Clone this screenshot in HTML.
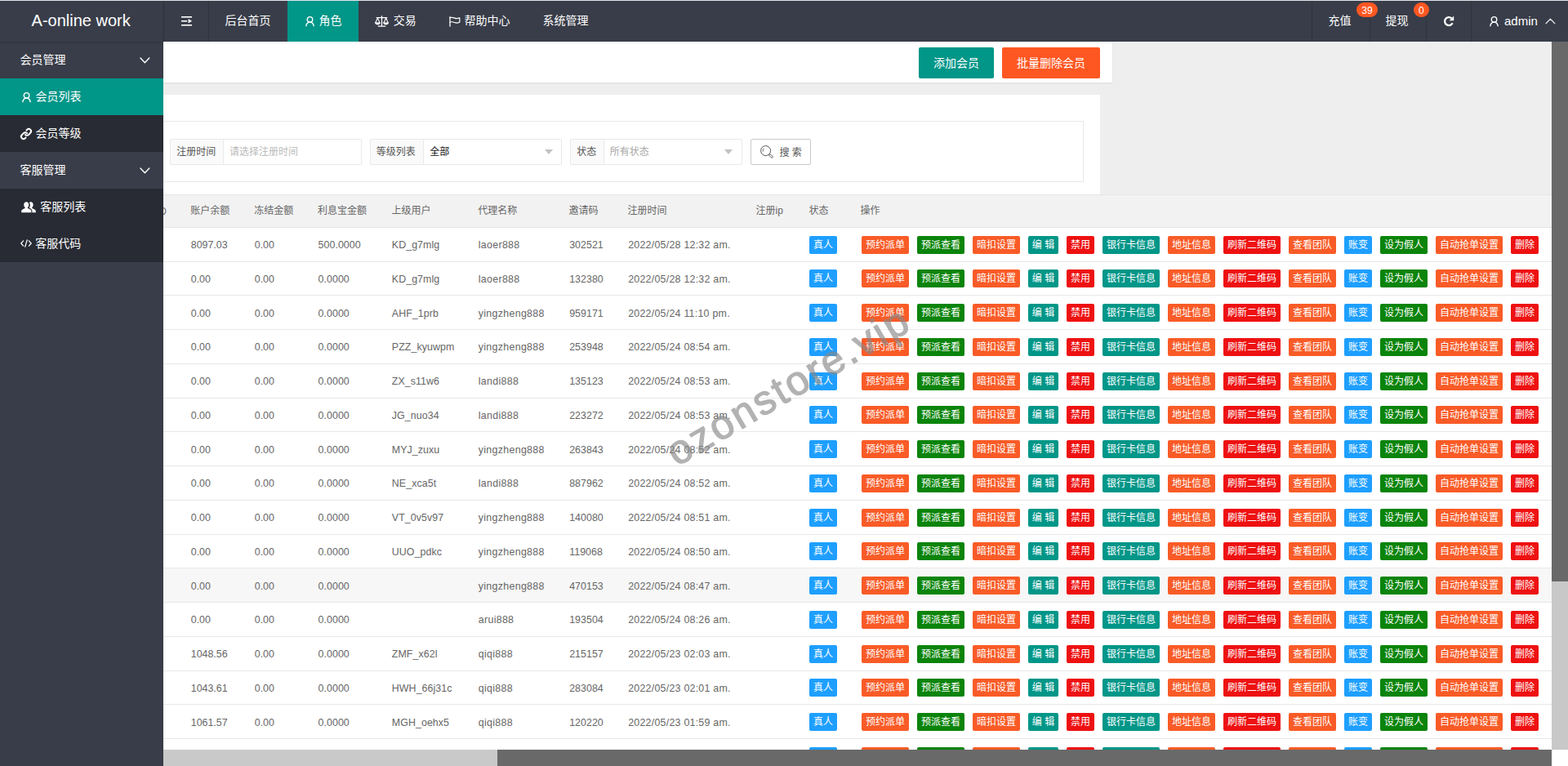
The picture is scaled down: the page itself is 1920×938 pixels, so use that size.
<!DOCTYPE html>
<html lang="zh-CN"><head><meta charset="utf-8"><title>A-online work</title>
<style>
html,body{margin:0;padding:0}
body{width:1920px;height:938px;overflow:hidden;position:relative;background:#eee;font-family:"Liberation Sans","Noto Sans CJK SC",sans-serif;font-size:12px;color:#666}
.a{position:absolute;box-sizing:border-box}
.t{white-space:nowrap}
svg.i{position:absolute;overflow:visible}
.w{color:#fff}
.btn{position:absolute;box-sizing:border-box;height:22px;border-radius:2px;color:#fff;font-size:12px;line-height:22px;text-align:center;white-space:nowrap;font-family:"Liberation Sans","Noto Sans CJK SC",sans-serif}
.o{background:#F95B27}.gr{background:#0b840b}.te{background:#009688}.re{background:#ee1111}.bl{background:#1E9FFF}
.row{position:absolute;left:200px;width:1700px;border-bottom:1px solid #e8e8e8;box-sizing:border-box;background:#fff}
.c{position:absolute;white-space:nowrap;color:#666;font-size:12.4px;height:20px;line-height:20px}

</style></head>
<body>
<div class="a" style="left:200px;top:51px;width:1162px;height:50px;background:#fff;box-shadow:0 1px 2px 0 rgba(0,0,0,.08)"></div>
<div class="a" style="left:200px;top:116px;width:1147px;height:123px;background:#fff"></div>
<div class="a" style="left:180px;top:148px;width:1147px;height:75px;border:1px solid #e8e8e8"></div>
<div class="a" style="left:1125px;top:58px;width:92px;height:38px;background:#009688;border-radius:2px;color:#fff;text-align:center;line-height:38px;font-size:14px">添加会员</div>
<div class="a" style="left:1227px;top:58px;width:120px;height:38px;background:#FF5722;border-radius:2px;color:#fff;text-align:center;line-height:38px;font-size:14px">批量删除会员</div>
<div class="a" style="left:208px;top:170px;width:234.5px;height:32px;border:1px solid #e9e9e9;border-radius:2px;background:#fff"></div><div class="a" style="left:208px;top:170px;width:65.5px;height:32px;border:1px solid #e9e9e9;border-radius:2px 0 0 2px;background:#FAFAFA"></div><div class="a t" style="left:216.2px;top:170px;height:32px;line-height:32px;font-size:12px;color:#555;">注册时间</div>
<div class="a t" style="left:281px;top:170px;height:32px;line-height:32px;font-size:12px;color:#b9b9b9;">请选择注册时间</div>
<div class="a" style="left:453px;top:170px;width:234.5px;height:32px;border:1px solid #e9e9e9;border-radius:2px;background:#fff"></div><div class="a" style="left:453px;top:170px;width:65.5px;height:32px;border:1px solid #e9e9e9;border-radius:2px 0 0 2px;background:#FAFAFA"></div><div class="a t" style="left:460.7px;top:170px;height:32px;line-height:32px;font-size:12px;color:#555;">等级列表</div>
<div class="a t" style="left:526.3px;top:170px;height:32px;line-height:32px;font-size:12px;color:#111;">全部</div>
<div class="a" style="left:666.5px;top:183px;width:0px;height:0px;border:5.5px solid transparent;border-top:6px solid #c2c2c2"></div>
<div class="a" style="left:698px;top:170px;width:211px;height:32px;border:1px solid #e9e9e9;border-radius:2px;background:#fff"></div><div class="a" style="left:698px;top:170px;width:41.5px;height:32px;border:1px solid #e9e9e9;border-radius:2px 0 0 2px;background:#FAFAFA"></div><div class="a t" style="left:706.2px;top:170px;height:32px;line-height:32px;font-size:12px;color:#555;">状态</div>
<div class="a t" style="left:746.8px;top:170px;height:32px;line-height:32px;font-size:12px;color:#a6a6a6;">所有状态</div>
<div class="a" style="left:887px;top:183px;width:0px;height:0px;border:5.5px solid transparent;border-top:6px solid #c2c2c2"></div>
<div class="a" style="left:919px;top:170px;width:74px;height:32px;border:1px solid #c9c9c9;border-radius:2px;background:#fff"></div>
<svg class="i" style="left:930px;top:177px" width="18" height="18" viewBox="0 0 18 18" fill="none" stroke="#555" stroke-width="1"><circle cx="7.600" cy="7.600" r="6"/><path d="M4.300 8.600a3.400 3.400 0 0 1 1.300-4" stroke-width=".9"/><rect x="-1.100" y="0" width="2.200" height="5.400" rx="1.100" transform="translate(12.100 12.100) rotate(-45)" fill="#fff" stroke-width=".9"/></svg>
<div class="a t" style="left:954.4px;top:171px;height:32px;line-height:32px;font-size:12px;color:#555;">搜 索</div>
<div class="a" style="left:200px;top:238px;width:1700px;height:41px;background:#f2f2f2;border-top:1px solid #e6e6e6;border-bottom:1px solid #e6e6e6"></div>
<div class="a t" style="left:195.2px;top:238.6px;height:40.5px;line-height:40.5px;font-size:12px;color:#666;clip-path:inset(0 0 0 4.8px)">D</div>
<div class="a t" style="left:233.35px;top:238px;height:40.5px;line-height:40.5px;font-size:12px;color:#666;">账户余额</div>
<div class="a t" style="left:311.35px;top:238px;height:40.5px;line-height:40.5px;font-size:12px;color:#666;">冻结金额</div>
<div class="a t" style="left:389.1px;top:238px;height:40.5px;line-height:40.5px;font-size:12px;color:#666;">利息宝金额</div>
<div class="a t" style="left:479.6px;top:238px;height:40.5px;line-height:40.5px;font-size:12px;color:#666;">上级用户</div>
<div class="a t" style="left:585.35px;top:238px;height:40.5px;line-height:40.5px;font-size:12px;color:#666;">代理名称</div>
<div class="a t" style="left:696.6px;top:238px;height:40.5px;line-height:40.5px;font-size:12px;color:#666;">邀请码</div>
<div class="a t" style="left:768.6px;top:238px;height:40.5px;line-height:40.5px;font-size:12px;color:#666;">注册时间</div>
<div class="a t" style="left:925.6px;top:238px;height:40.5px;line-height:40.5px;font-size:12px;color:#666;">注册ip</div>
<div class="a t" style="left:990.6px;top:238px;height:40.5px;line-height:40.5px;font-size:12px;color:#666;">状态</div>
<div class="a t" style="left:1053.6px;top:238px;height:40.5px;line-height:40.5px;font-size:12px;color:#666;">操作</div>
<div class="row" style="top:279px;height:42px;"><div class="c" style="left:33.75px;top:11px">8097.03</div><div class="c" style="left:111.75px;top:11px">0.00</div><div class="c" style="left:189.6px;top:11px;letter-spacing:0.05px">500.0000</div><div class="c" style="left:279.8px;top:11px;letter-spacing:0.08px">KD_g7mlg</div><div class="c" style="left:385.8px;top:11px;letter-spacing:0.31px">laoer888</div><div class="c" style="left:497.2px;top:11px;letter-spacing:0.04px">302521</div><div class="c" style="left:569.2px;top:11px;letter-spacing:0.25px">2022/05/28 12:32 am.</div><div class="btn bl" style="left:791px;top:10px;width:34px">真人</div><div class="btn o" style="left:855px;top:10px;width:58px">预约派单</div><div class="btn gr" style="left:923px;top:10px;width:58px">预派查看</div><div class="btn o" style="left:991px;top:10px;width:58px">暗扣设置</div><div class="btn te" style="left:1059px;top:10px;width:37px">编 辑</div><div class="btn re" style="left:1106px;top:10px;width:34px">禁用</div><div class="btn te" style="left:1150px;top:10px;width:70px">银行卡信息</div><div class="btn o" style="left:1230px;top:10px;width:58px">地址信息</div><div class="btn re" style="left:1298px;top:10px;width:70px">刷新二维码</div><div class="btn o" style="left:1378px;top:10px;width:58px">查看团队</div><div class="btn bl" style="left:1446px;top:10px;width:34px">账变</div><div class="btn gr" style="left:1490px;top:10px;width:58px">设为假人</div><div class="btn o" style="left:1558px;top:10px;width:82px">自动抢单设置</div><div class="btn re" style="left:1650px;top:10px;width:34px">删除</div></div>
<div class="row" style="top:321px;height:41px;"><div class="c" style="left:33.75px;top:11px">0.00</div><div class="c" style="left:111.75px;top:11px">0.00</div><div class="c" style="left:189.6px;top:11px;letter-spacing:0.05px">0.0000</div><div class="c" style="left:279.8px;top:11px;letter-spacing:0.08px">KD_g7mlg</div><div class="c" style="left:385.8px;top:11px;letter-spacing:0.31px">laoer888</div><div class="c" style="left:497.2px;top:11px;letter-spacing:0.04px">132380</div><div class="c" style="left:569.2px;top:11px;letter-spacing:0.25px">2022/05/28 12:32 am.</div><div class="btn bl" style="left:791px;top:9px;width:34px">真人</div><div class="btn o" style="left:855px;top:9px;width:58px">预约派单</div><div class="btn gr" style="left:923px;top:9px;width:58px">预派查看</div><div class="btn o" style="left:991px;top:9px;width:58px">暗扣设置</div><div class="btn te" style="left:1059px;top:9px;width:37px">编 辑</div><div class="btn re" style="left:1106px;top:9px;width:34px">禁用</div><div class="btn te" style="left:1150px;top:9px;width:70px">银行卡信息</div><div class="btn o" style="left:1230px;top:9px;width:58px">地址信息</div><div class="btn re" style="left:1298px;top:9px;width:70px">刷新二维码</div><div class="btn o" style="left:1378px;top:9px;width:58px">查看团队</div><div class="btn bl" style="left:1446px;top:9px;width:34px">账变</div><div class="btn gr" style="left:1490px;top:9px;width:58px">设为假人</div><div class="btn o" style="left:1558px;top:9px;width:82px">自动抢单设置</div><div class="btn re" style="left:1650px;top:9px;width:34px">删除</div></div>
<div class="row" style="top:362px;height:42px;"><div class="c" style="left:33.75px;top:12px">0.00</div><div class="c" style="left:111.75px;top:12px">0.00</div><div class="c" style="left:189.6px;top:12px;letter-spacing:0.05px">0.0000</div><div class="c" style="left:279.8px;top:12px;letter-spacing:0.08px">AHF_1prb</div><div class="c" style="left:385.8px;top:12px;letter-spacing:0.31px">yingzheng888</div><div class="c" style="left:497.2px;top:12px;letter-spacing:0.04px">959171</div><div class="c" style="left:569.2px;top:12px;letter-spacing:0.25px">2022/05/24 11:10 pm.</div><div class="btn bl" style="left:791px;top:10px;width:34px">真人</div><div class="btn o" style="left:855px;top:10px;width:58px">预约派单</div><div class="btn gr" style="left:923px;top:10px;width:58px">预派查看</div><div class="btn o" style="left:991px;top:10px;width:58px">暗扣设置</div><div class="btn te" style="left:1059px;top:10px;width:37px">编 辑</div><div class="btn re" style="left:1106px;top:10px;width:34px">禁用</div><div class="btn te" style="left:1150px;top:10px;width:70px">银行卡信息</div><div class="btn o" style="left:1230px;top:10px;width:58px">地址信息</div><div class="btn re" style="left:1298px;top:10px;width:70px">刷新二维码</div><div class="btn o" style="left:1378px;top:10px;width:58px">查看团队</div><div class="btn bl" style="left:1446px;top:10px;width:34px">账变</div><div class="btn gr" style="left:1490px;top:10px;width:58px">设为假人</div><div class="btn o" style="left:1558px;top:10px;width:82px">自动抢单设置</div><div class="btn re" style="left:1650px;top:10px;width:34px">删除</div></div>
<div class="row" style="top:404px;height:42px;"><div class="c" style="left:33.75px;top:11px">0.00</div><div class="c" style="left:111.75px;top:11px">0.00</div><div class="c" style="left:189.6px;top:11px;letter-spacing:0.05px">0.0000</div><div class="c" style="left:279.8px;top:11px;letter-spacing:0.08px">PZZ_kyuwpm</div><div class="c" style="left:385.8px;top:11px;letter-spacing:0.31px">yingzheng888</div><div class="c" style="left:497.2px;top:11px;letter-spacing:0.04px">253948</div><div class="c" style="left:569.2px;top:11px;letter-spacing:0.25px">2022/05/24 08:54 am.</div><div class="btn bl" style="left:791px;top:10px;width:34px">真人</div><div class="btn o" style="left:855px;top:10px;width:58px">预约派单</div><div class="btn gr" style="left:923px;top:10px;width:58px">预派查看</div><div class="btn o" style="left:991px;top:10px;width:58px">暗扣设置</div><div class="btn te" style="left:1059px;top:10px;width:37px">编 辑</div><div class="btn re" style="left:1106px;top:10px;width:34px">禁用</div><div class="btn te" style="left:1150px;top:10px;width:70px">银行卡信息</div><div class="btn o" style="left:1230px;top:10px;width:58px">地址信息</div><div class="btn re" style="left:1298px;top:10px;width:70px">刷新二维码</div><div class="btn o" style="left:1378px;top:10px;width:58px">查看团队</div><div class="btn bl" style="left:1446px;top:10px;width:34px">账变</div><div class="btn gr" style="left:1490px;top:10px;width:58px">设为假人</div><div class="btn o" style="left:1558px;top:10px;width:82px">自动抢单设置</div><div class="btn re" style="left:1650px;top:10px;width:34px">删除</div></div>
<div class="row" style="top:446px;height:42px;"><div class="c" style="left:33.75px;top:11px">0.00</div><div class="c" style="left:111.75px;top:11px">0.00</div><div class="c" style="left:189.6px;top:11px;letter-spacing:0.05px">0.0000</div><div class="c" style="left:279.8px;top:11px;letter-spacing:0.08px">ZX_s11w6</div><div class="c" style="left:385.8px;top:11px;letter-spacing:0.31px">landi888</div><div class="c" style="left:497.2px;top:11px;letter-spacing:0.04px">135123</div><div class="c" style="left:569.2px;top:11px;letter-spacing:0.25px">2022/05/24 08:53 am.</div><div class="btn bl" style="left:791px;top:10px;width:34px">真人</div><div class="btn o" style="left:855px;top:10px;width:58px">预约派单</div><div class="btn gr" style="left:923px;top:10px;width:58px">预派查看</div><div class="btn o" style="left:991px;top:10px;width:58px">暗扣设置</div><div class="btn te" style="left:1059px;top:10px;width:37px">编 辑</div><div class="btn re" style="left:1106px;top:10px;width:34px">禁用</div><div class="btn te" style="left:1150px;top:10px;width:70px">银行卡信息</div><div class="btn o" style="left:1230px;top:10px;width:58px">地址信息</div><div class="btn re" style="left:1298px;top:10px;width:70px">刷新二维码</div><div class="btn o" style="left:1378px;top:10px;width:58px">查看团队</div><div class="btn bl" style="left:1446px;top:10px;width:34px">账变</div><div class="btn gr" style="left:1490px;top:10px;width:58px">设为假人</div><div class="btn o" style="left:1558px;top:10px;width:82px">自动抢单设置</div><div class="btn re" style="left:1650px;top:10px;width:34px">删除</div></div>
<div class="row" style="top:488px;height:41px;"><div class="c" style="left:33.75px;top:11px">0.00</div><div class="c" style="left:111.75px;top:11px">0.00</div><div class="c" style="left:189.6px;top:11px;letter-spacing:0.05px">0.0000</div><div class="c" style="left:279.8px;top:11px;letter-spacing:0.08px">JG_nuo34</div><div class="c" style="left:385.8px;top:11px;letter-spacing:0.31px">landi888</div><div class="c" style="left:497.2px;top:11px;letter-spacing:0.04px">223272</div><div class="c" style="left:569.2px;top:11px;letter-spacing:0.25px">2022/05/24 08:53 am.</div><div class="btn bl" style="left:791px;top:9px;width:34px">真人</div><div class="btn o" style="left:855px;top:9px;width:58px">预约派单</div><div class="btn gr" style="left:923px;top:9px;width:58px">预派查看</div><div class="btn o" style="left:991px;top:9px;width:58px">暗扣设置</div><div class="btn te" style="left:1059px;top:9px;width:37px">编 辑</div><div class="btn re" style="left:1106px;top:9px;width:34px">禁用</div><div class="btn te" style="left:1150px;top:9px;width:70px">银行卡信息</div><div class="btn o" style="left:1230px;top:9px;width:58px">地址信息</div><div class="btn re" style="left:1298px;top:9px;width:70px">刷新二维码</div><div class="btn o" style="left:1378px;top:9px;width:58px">查看团队</div><div class="btn bl" style="left:1446px;top:9px;width:34px">账变</div><div class="btn gr" style="left:1490px;top:9px;width:58px">设为假人</div><div class="btn o" style="left:1558px;top:9px;width:82px">自动抢单设置</div><div class="btn re" style="left:1650px;top:9px;width:34px">删除</div></div>
<div class="row" style="top:529px;height:42px;"><div class="c" style="left:33.75px;top:12px">0.00</div><div class="c" style="left:111.75px;top:12px">0.00</div><div class="c" style="left:189.6px;top:12px;letter-spacing:0.05px">0.0000</div><div class="c" style="left:279.8px;top:12px;letter-spacing:0.08px">MYJ_zuxu</div><div class="c" style="left:385.8px;top:12px;letter-spacing:0.31px">yingzheng888</div><div class="c" style="left:497.2px;top:12px;letter-spacing:0.04px">263843</div><div class="c" style="left:569.2px;top:12px;letter-spacing:0.25px">2022/05/24 08:52 am.</div><div class="btn bl" style="left:791px;top:10px;width:34px">真人</div><div class="btn o" style="left:855px;top:10px;width:58px">预约派单</div><div class="btn gr" style="left:923px;top:10px;width:58px">预派查看</div><div class="btn o" style="left:991px;top:10px;width:58px">暗扣设置</div><div class="btn te" style="left:1059px;top:10px;width:37px">编 辑</div><div class="btn re" style="left:1106px;top:10px;width:34px">禁用</div><div class="btn te" style="left:1150px;top:10px;width:70px">银行卡信息</div><div class="btn o" style="left:1230px;top:10px;width:58px">地址信息</div><div class="btn re" style="left:1298px;top:10px;width:70px">刷新二维码</div><div class="btn o" style="left:1378px;top:10px;width:58px">查看团队</div><div class="btn bl" style="left:1446px;top:10px;width:34px">账变</div><div class="btn gr" style="left:1490px;top:10px;width:58px">设为假人</div><div class="btn o" style="left:1558px;top:10px;width:82px">自动抢单设置</div><div class="btn re" style="left:1650px;top:10px;width:34px">删除</div></div>
<div class="row" style="top:571px;height:42px;"><div class="c" style="left:33.75px;top:11px">0.00</div><div class="c" style="left:111.75px;top:11px">0.00</div><div class="c" style="left:189.6px;top:11px;letter-spacing:0.05px">0.0000</div><div class="c" style="left:279.8px;top:11px;letter-spacing:0.08px">NE_xca5t</div><div class="c" style="left:385.8px;top:11px;letter-spacing:0.31px">landi888</div><div class="c" style="left:497.2px;top:11px;letter-spacing:0.04px">887962</div><div class="c" style="left:569.2px;top:11px;letter-spacing:0.25px">2022/05/24 08:52 am.</div><div class="btn bl" style="left:791px;top:10px;width:34px">真人</div><div class="btn o" style="left:855px;top:10px;width:58px">预约派单</div><div class="btn gr" style="left:923px;top:10px;width:58px">预派查看</div><div class="btn o" style="left:991px;top:10px;width:58px">暗扣设置</div><div class="btn te" style="left:1059px;top:10px;width:37px">编 辑</div><div class="btn re" style="left:1106px;top:10px;width:34px">禁用</div><div class="btn te" style="left:1150px;top:10px;width:70px">银行卡信息</div><div class="btn o" style="left:1230px;top:10px;width:58px">地址信息</div><div class="btn re" style="left:1298px;top:10px;width:70px">刷新二维码</div><div class="btn o" style="left:1378px;top:10px;width:58px">查看团队</div><div class="btn bl" style="left:1446px;top:10px;width:34px">账变</div><div class="btn gr" style="left:1490px;top:10px;width:58px">设为假人</div><div class="btn o" style="left:1558px;top:10px;width:82px">自动抢单设置</div><div class="btn re" style="left:1650px;top:10px;width:34px">删除</div></div>
<div class="row" style="top:613px;height:42px;"><div class="c" style="left:33.75px;top:11px">0.00</div><div class="c" style="left:111.75px;top:11px">0.00</div><div class="c" style="left:189.6px;top:11px;letter-spacing:0.05px">0.0000</div><div class="c" style="left:279.8px;top:11px;letter-spacing:0.08px">VT_0v5v97</div><div class="c" style="left:385.8px;top:11px;letter-spacing:0.31px">yingzheng888</div><div class="c" style="left:497.2px;top:11px;letter-spacing:0.04px">140080</div><div class="c" style="left:569.2px;top:11px;letter-spacing:0.25px">2022/05/24 08:51 am.</div><div class="btn bl" style="left:791px;top:10px;width:34px">真人</div><div class="btn o" style="left:855px;top:10px;width:58px">预约派单</div><div class="btn gr" style="left:923px;top:10px;width:58px">预派查看</div><div class="btn o" style="left:991px;top:10px;width:58px">暗扣设置</div><div class="btn te" style="left:1059px;top:10px;width:37px">编 辑</div><div class="btn re" style="left:1106px;top:10px;width:34px">禁用</div><div class="btn te" style="left:1150px;top:10px;width:70px">银行卡信息</div><div class="btn o" style="left:1230px;top:10px;width:58px">地址信息</div><div class="btn re" style="left:1298px;top:10px;width:70px">刷新二维码</div><div class="btn o" style="left:1378px;top:10px;width:58px">查看团队</div><div class="btn bl" style="left:1446px;top:10px;width:34px">账变</div><div class="btn gr" style="left:1490px;top:10px;width:58px">设为假人</div><div class="btn o" style="left:1558px;top:10px;width:82px">自动抢单设置</div><div class="btn re" style="left:1650px;top:10px;width:34px">删除</div></div>
<div class="row" style="top:655px;height:41px;"><div class="c" style="left:33.75px;top:11px">0.00</div><div class="c" style="left:111.75px;top:11px">0.00</div><div class="c" style="left:189.6px;top:11px;letter-spacing:0.05px">0.0000</div><div class="c" style="left:279.8px;top:11px;letter-spacing:0.08px">UUO_pdkc</div><div class="c" style="left:385.8px;top:11px;letter-spacing:0.31px">yingzheng888</div><div class="c" style="left:497.2px;top:11px;letter-spacing:0.04px">119068</div><div class="c" style="left:569.2px;top:11px;letter-spacing:0.25px">2022/05/24 08:50 am.</div><div class="btn bl" style="left:791px;top:9px;width:34px">真人</div><div class="btn o" style="left:855px;top:9px;width:58px">预约派单</div><div class="btn gr" style="left:923px;top:9px;width:58px">预派查看</div><div class="btn o" style="left:991px;top:9px;width:58px">暗扣设置</div><div class="btn te" style="left:1059px;top:9px;width:37px">编 辑</div><div class="btn re" style="left:1106px;top:9px;width:34px">禁用</div><div class="btn te" style="left:1150px;top:9px;width:70px">银行卡信息</div><div class="btn o" style="left:1230px;top:9px;width:58px">地址信息</div><div class="btn re" style="left:1298px;top:9px;width:70px">刷新二维码</div><div class="btn o" style="left:1378px;top:9px;width:58px">查看团队</div><div class="btn bl" style="left:1446px;top:9px;width:34px">账变</div><div class="btn gr" style="left:1490px;top:9px;width:58px">设为假人</div><div class="btn o" style="left:1558px;top:9px;width:82px">自动抢单设置</div><div class="btn re" style="left:1650px;top:9px;width:34px">删除</div></div>
<div class="row" style="top:696px;height:42px;background:#f7f7f7;"><div class="c" style="left:33.75px;top:12px">0.00</div><div class="c" style="left:111.75px;top:12px">0.00</div><div class="c" style="left:189.6px;top:12px;letter-spacing:0.05px">0.0000</div><div class="c" style="left:385.8px;top:12px;letter-spacing:0.31px">yingzheng888</div><div class="c" style="left:497.2px;top:12px;letter-spacing:0.04px">470153</div><div class="c" style="left:569.2px;top:12px;letter-spacing:0.25px">2022/05/24 08:47 am.</div><div class="btn bl" style="left:791px;top:10px;width:34px">真人</div><div class="btn o" style="left:855px;top:10px;width:58px">预约派单</div><div class="btn gr" style="left:923px;top:10px;width:58px">预派查看</div><div class="btn o" style="left:991px;top:10px;width:58px">暗扣设置</div><div class="btn te" style="left:1059px;top:10px;width:37px">编 辑</div><div class="btn re" style="left:1106px;top:10px;width:34px">禁用</div><div class="btn te" style="left:1150px;top:10px;width:70px">银行卡信息</div><div class="btn o" style="left:1230px;top:10px;width:58px">地址信息</div><div class="btn re" style="left:1298px;top:10px;width:70px">刷新二维码</div><div class="btn o" style="left:1378px;top:10px;width:58px">查看团队</div><div class="btn bl" style="left:1446px;top:10px;width:34px">账变</div><div class="btn gr" style="left:1490px;top:10px;width:58px">设为假人</div><div class="btn o" style="left:1558px;top:10px;width:82px">自动抢单设置</div><div class="btn re" style="left:1650px;top:10px;width:34px">删除</div></div>
<div class="row" style="top:738px;height:42px;"><div class="c" style="left:33.75px;top:11px">0.00</div><div class="c" style="left:111.75px;top:11px">0.00</div><div class="c" style="left:189.6px;top:11px;letter-spacing:0.05px">0.0000</div><div class="c" style="left:385.8px;top:11px;letter-spacing:0.31px">arui888</div><div class="c" style="left:497.2px;top:11px;letter-spacing:0.04px">193504</div><div class="c" style="left:569.2px;top:11px;letter-spacing:0.25px">2022/05/24 08:26 am.</div><div class="btn bl" style="left:791px;top:10px;width:34px">真人</div><div class="btn o" style="left:855px;top:10px;width:58px">预约派单</div><div class="btn gr" style="left:923px;top:10px;width:58px">预派查看</div><div class="btn o" style="left:991px;top:10px;width:58px">暗扣设置</div><div class="btn te" style="left:1059px;top:10px;width:37px">编 辑</div><div class="btn re" style="left:1106px;top:10px;width:34px">禁用</div><div class="btn te" style="left:1150px;top:10px;width:70px">银行卡信息</div><div class="btn o" style="left:1230px;top:10px;width:58px">地址信息</div><div class="btn re" style="left:1298px;top:10px;width:70px">刷新二维码</div><div class="btn o" style="left:1378px;top:10px;width:58px">查看团队</div><div class="btn bl" style="left:1446px;top:10px;width:34px">账变</div><div class="btn gr" style="left:1490px;top:10px;width:58px">设为假人</div><div class="btn o" style="left:1558px;top:10px;width:82px">自动抢单设置</div><div class="btn re" style="left:1650px;top:10px;width:34px">删除</div></div>
<div class="row" style="top:780px;height:42px;"><div class="c" style="left:33.75px;top:11px">1048.56</div><div class="c" style="left:111.75px;top:11px">0.00</div><div class="c" style="left:189.6px;top:11px;letter-spacing:0.05px">0.0000</div><div class="c" style="left:279.8px;top:11px;letter-spacing:0.08px">ZMF_x62l</div><div class="c" style="left:385.8px;top:11px;letter-spacing:0.31px">qiqi888</div><div class="c" style="left:497.2px;top:11px;letter-spacing:0.04px">215157</div><div class="c" style="left:569.2px;top:11px;letter-spacing:0.25px">2022/05/23 02:03 am.</div><div class="btn bl" style="left:791px;top:10px;width:34px">真人</div><div class="btn o" style="left:855px;top:10px;width:58px">预约派单</div><div class="btn gr" style="left:923px;top:10px;width:58px">预派查看</div><div class="btn o" style="left:991px;top:10px;width:58px">暗扣设置</div><div class="btn te" style="left:1059px;top:10px;width:37px">编 辑</div><div class="btn re" style="left:1106px;top:10px;width:34px">禁用</div><div class="btn te" style="left:1150px;top:10px;width:70px">银行卡信息</div><div class="btn o" style="left:1230px;top:10px;width:58px">地址信息</div><div class="btn re" style="left:1298px;top:10px;width:70px">刷新二维码</div><div class="btn o" style="left:1378px;top:10px;width:58px">查看团队</div><div class="btn bl" style="left:1446px;top:10px;width:34px">账变</div><div class="btn gr" style="left:1490px;top:10px;width:58px">设为假人</div><div class="btn o" style="left:1558px;top:10px;width:82px">自动抢单设置</div><div class="btn re" style="left:1650px;top:10px;width:34px">删除</div></div>
<div class="row" style="top:822px;height:41px;"><div class="c" style="left:33.75px;top:11px">1043.61</div><div class="c" style="left:111.75px;top:11px">0.00</div><div class="c" style="left:189.6px;top:11px;letter-spacing:0.05px">0.0000</div><div class="c" style="left:279.8px;top:11px;letter-spacing:0.08px">HWH_66j31c</div><div class="c" style="left:385.8px;top:11px;letter-spacing:0.31px">qiqi888</div><div class="c" style="left:497.2px;top:11px;letter-spacing:0.04px">283084</div><div class="c" style="left:569.2px;top:11px;letter-spacing:0.25px">2022/05/23 02:01 am.</div><div class="btn bl" style="left:791px;top:9px;width:34px">真人</div><div class="btn o" style="left:855px;top:9px;width:58px">预约派单</div><div class="btn gr" style="left:923px;top:9px;width:58px">预派查看</div><div class="btn o" style="left:991px;top:9px;width:58px">暗扣设置</div><div class="btn te" style="left:1059px;top:9px;width:37px">编 辑</div><div class="btn re" style="left:1106px;top:9px;width:34px">禁用</div><div class="btn te" style="left:1150px;top:9px;width:70px">银行卡信息</div><div class="btn o" style="left:1230px;top:9px;width:58px">地址信息</div><div class="btn re" style="left:1298px;top:9px;width:70px">刷新二维码</div><div class="btn o" style="left:1378px;top:9px;width:58px">查看团队</div><div class="btn bl" style="left:1446px;top:9px;width:34px">账变</div><div class="btn gr" style="left:1490px;top:9px;width:58px">设为假人</div><div class="btn o" style="left:1558px;top:9px;width:82px">自动抢单设置</div><div class="btn re" style="left:1650px;top:9px;width:34px">删除</div></div>
<div class="row" style="top:863px;height:42px;"><div class="c" style="left:33.75px;top:12px">1061.57</div><div class="c" style="left:111.75px;top:12px">0.00</div><div class="c" style="left:189.6px;top:12px;letter-spacing:0.05px">0.0000</div><div class="c" style="left:279.8px;top:12px;letter-spacing:0.08px">MGH_oehx5</div><div class="c" style="left:385.8px;top:12px;letter-spacing:0.31px">qiqi888</div><div class="c" style="left:497.2px;top:12px;letter-spacing:0.04px">120220</div><div class="c" style="left:569.2px;top:12px;letter-spacing:0.25px">2022/05/23 01:59 am.</div><div class="btn bl" style="left:791px;top:10px;width:34px">真人</div><div class="btn o" style="left:855px;top:10px;width:58px">预约派单</div><div class="btn gr" style="left:923px;top:10px;width:58px">预派查看</div><div class="btn o" style="left:991px;top:10px;width:58px">暗扣设置</div><div class="btn te" style="left:1059px;top:10px;width:37px">编 辑</div><div class="btn re" style="left:1106px;top:10px;width:34px">禁用</div><div class="btn te" style="left:1150px;top:10px;width:70px">银行卡信息</div><div class="btn o" style="left:1230px;top:10px;width:58px">地址信息</div><div class="btn re" style="left:1298px;top:10px;width:70px">刷新二维码</div><div class="btn o" style="left:1378px;top:10px;width:58px">查看团队</div><div class="btn bl" style="left:1446px;top:10px;width:34px">账变</div><div class="btn gr" style="left:1490px;top:10px;width:58px">设为假人</div><div class="btn o" style="left:1558px;top:10px;width:82px">自动抢单设置</div><div class="btn re" style="left:1650px;top:10px;width:34px">删除</div></div>
<div class="row" style="top:905px;height:42px;"><div class="btn bl" style="left:791px;top:10px;width:34px">真人</div><div class="btn o" style="left:855px;top:10px;width:58px">预约派单</div><div class="btn gr" style="left:923px;top:10px;width:58px">预派查看</div><div class="btn o" style="left:991px;top:10px;width:58px">暗扣设置</div><div class="btn te" style="left:1059px;top:10px;width:37px">编 辑</div><div class="btn re" style="left:1106px;top:10px;width:34px">禁用</div><div class="btn te" style="left:1150px;top:10px;width:70px">银行卡信息</div><div class="btn o" style="left:1230px;top:10px;width:58px">地址信息</div><div class="btn re" style="left:1298px;top:10px;width:70px">刷新二维码</div><div class="btn o" style="left:1378px;top:10px;width:58px">查看团队</div><div class="btn bl" style="left:1446px;top:10px;width:34px">账变</div><div class="btn gr" style="left:1490px;top:10px;width:58px">设为假人</div><div class="btn o" style="left:1558px;top:10px;width:82px">自动抢单设置</div><div class="btn re" style="left:1650px;top:10px;width:34px">删除</div></div>
<div class="a t" style="left:828.6px;top:572.2px;height:0;line-height:0;font-size:50px;letter-spacing:3px;color:#888;opacity:.64;transform-origin:0 0;transform:rotate(-30.3deg) translateY(-17.3px);-webkit-text-stroke:1.3px #888;paint-order:stroke fill">ozonstore.vip</div>
<div class="a" style="left:1900px;top:51px;width:20px;height:867px;background:#c8c8c8"></div>
<div class="a" style="left:1900px;top:51px;width:20px;height:661px;background:#696969"></div>
<div class="a" style="left:200px;top:918px;width:1700px;height:20px;background:#c9c9c9"></div>
<div class="a" style="left:609px;top:918px;width:1291px;height:20px;background:#696969"></div>
<div class="a" style="left:1900px;top:918px;width:20px;height:20px;background:#fff"></div>
<div class="a" style="left:0px;top:51px;width:200px;height:887px;background:#393D49"></div>
<div class="a" style="left:0px;top:96px;width:200px;height:45px;background:#009688"></div>
<div class="a" style="left:0px;top:141px;width:200px;height:45px;background:#282B33"></div>
<div class="a" style="left:0px;top:231px;width:200px;height:90px;background:#282B33"></div>
<div class="a t" style="left:24.6px;top:51px;height:45px;line-height:45px;font-size:14px;color:#fff;">会员管理</div>
<svg class="i" style="left:171.3px;top:70.2px" width="13" height="8" viewBox="0 0 13 8" fill="none" stroke="#fff" stroke-width="1.4" stroke-linecap="round" stroke-linejoin="round"><path d="M1 1l5.400 5.800 5.400-5.800"/></svg>
<div class="a t" style="left:43.6px;top:96px;height:45px;line-height:45px;font-size:14px;color:#fff;">会员列表</div>
<div class="a t" style="left:43.6px;top:141px;height:45px;line-height:45px;font-size:14px;color:#fff;">会员等级</div>
<div class="a t" style="left:24.6px;top:186px;height:45px;line-height:45px;font-size:14px;color:#fff;">客服管理</div>
<svg class="i" style="left:171.3px;top:205.2px" width="13" height="8" viewBox="0 0 13 8" fill="none" stroke="#fff" stroke-width="1.4" stroke-linecap="round" stroke-linejoin="round"><path d="M1 1l5.400 5.800 5.400-5.800"/></svg>
<div class="a t" style="left:49.2px;top:231px;height:45px;line-height:45px;font-size:14px;color:#fff;">客服列表</div>
<div class="a t" style="left:43.2px;top:276px;height:45px;line-height:45px;font-size:14px;color:#fff;">客服代码</div>
<svg class="i" style="left:26.8px;top:112.5px" width="11" height="12.500" viewBox="0 0 11 12.500"><circle cx="5.500" cy="3.900" r="3.250" fill="none" stroke="#fff" stroke-width="1.400"/><path d="M.8 12.300a4.700 5.300 0 0 1 9.400 0" fill="none" stroke="#fff" stroke-width="1.400" stroke-linecap="butt"/></svg>
<svg class="i" style="left:25px;top:156.5px" width="14" height="14" viewBox="0 0 14 14" fill="none" stroke="#fff" stroke-width="2" stroke-linecap="round"><path d="M6 8a2.8 2.8 0 0 0 4 0l2.2-2.2a2.8 2.8 0 0 0-4-4L7.4 2.6"/><path d="M8 6a2.8 2.8 0 0 0-4 0L1.8 8.2a2.8 2.8 0 0 0 4 4l.8-.8"/></svg>
<svg class="i" style="left:25.700px;top:246.700px" width="18" height="14.200" viewBox="0 0 19 15" fill="#fff"><path d="M6.6 .3c1.9 0 3.2 1.5 3.2 3.6 0 1.5-.6 2.8-1.5 3.5v1c1.600 .6 4.300 1.600 4.700 3 .1 .5 .1 2.600 .1 2.600H.2s0-2.100 .1-2.600c.4-1.400 3.100-2.400 4.600-3v-1C4 6.700 3.400 5.400 3.400 3.900 3.400 1.800 4.700 .3 6.600 .3z"/><path d="M12.300 .3c1.900 0 3.200 1.500 3.200 3.600 0 1.500-.6 2.800-1.500 3.500v1c1.600 .6 4.300 1.600 4.700 3 .1 .5 .1 2.600 .1 2.600h-4.600c0-1 0-2.300-.2-3-.4-1.400-2.200-2.400-3.600-3.100.700-1 1.100-2.300 1.100-3.600 0-1.300-.4-2.500-1.100-3.300.5-.4 1.200-.7 1.900-.7z"/></svg>
<svg class="i" style="left:25px;top:293px" width="14" height="10" viewBox="0 0 14 10" fill="none" stroke="#fff" stroke-width="1.2" stroke-linecap="round" stroke-linejoin="round"><path d="M3.600 1.800L.8 5l2.800 3.200M10.400 1.800L13.200 5l-2.800 3.200M8.300 .8L5.700 9.200"/></svg>
<div class="a" style="left:0px;top:0px;width:1920px;height:1px;background:#e3e4ea"></div>
<div class="a" style="left:0px;top:1px;width:1920px;height:50px;background:#393D49"></div>
<div class="a" style="left:0px;top:1px;width:200px;height:50px;box-shadow:0 1px 2px 0 rgba(0,0,0,.18)"></div>
<div class="a" style="left:200px;top:1px;width:1px;height:50px;background:rgba(0,0,0,.16)"></div>
<div class="a" style="left:254.5px;top:1px;width:1px;height:50px;background:rgba(0,0,0,.16)"></div>
<div class="a" style="left:1605.5px;top:1px;width:1px;height:50px;background:rgba(0,0,0,.16)"></div>
<div class="a" style="left:1676.5px;top:1px;width:1px;height:50px;background:rgba(0,0,0,.16)"></div>
<div class="a" style="left:1745.5px;top:1px;width:1px;height:50px;background:rgba(0,0,0,.16)"></div>
<div class="a" style="left:1801px;top:1px;width:1px;height:50px;background:rgba(0,0,0,.16)"></div>
<div class="a" style="left:352px;top:1px;width:87px;height:50px;background:#009688"></div>
<div class="a t" style="left:38.6px;top:-0.5px;height:50px;line-height:50px;font-size:20px;color:#fff;">A-online work</div>
<svg class="i" style="left:222px;top:20px" width="13" height="12" viewBox="0 0 13 12" fill="#fff"><rect x="0" y="0" width="13" height="1.600"/><rect x="0" y="5" width="7.200" height="1.600"/><rect x="0" y="10" width="13" height="1.600"/><path d="M8.600 3.100L13 5.800L8.600 8.500z"/></svg>
<div class="a t" style="left:275.5px;top:-0.2px;height:50px;line-height:50px;font-size:14px;color:#fff;">后台首页</div>
<svg class="i" style="left:373.9px;top:19.7px" width="11" height="12.500" viewBox="0 0 11 12.500"><circle cx="5.500" cy="3.900" r="3.250" fill="none" stroke="#fff" stroke-width="1.400"/><path d="M.8 12.300a4.700 5.300 0 0 1 9.400 0" fill="none" stroke="#fff" stroke-width="1.400" stroke-linecap="butt"/></svg>
<div class="a t" style="left:390.6px;top:-0.2px;height:50px;line-height:50px;font-size:14px;color:#fff;">角色</div>
<svg class="i" style="left:458.700px;top:19.200px" width="17" height="14" viewBox="0 0 17 14" fill="none" stroke="#fff" stroke-width="1.100" stroke-linecap="round" stroke-linejoin="round"><circle cx="8.500" cy="1" r=".8" fill="#fff" stroke="none"/><path d="M2.200 2.600h12.600M8.500 1.500v11.300M4.300 13.100h8.400" stroke-width="1.300"/><path d="M3.400 2.900L.9 8.700M3.400 2.900L5.900 8.700M13.600 2.900L11.100 8.700M13.600 2.900L16.100 8.700"/><path d="M.4 8.800h6a3 2.300 0 0 1-6 0zM10.600 8.800h6a3 2.300 0 0 1-6 0z" fill="#fff" stroke-width=".6"/></svg>
<div class="a t" style="left:481.7px;top:-0.2px;height:50px;line-height:50px;font-size:14px;color:#fff;">交易</div>
<svg class="i" style="left:550.200px;top:19.600px" width="14" height="13" viewBox="0 0 14 13" fill="none" stroke="#fff" stroke-width="1.300" stroke-linecap="round" stroke-linejoin="round"><path d="M1 .7v11.500"/><path d="M1 1.800c2-.9 3.600-.5 5.500 .3s3.800 .8 6.300-.3v5.400c-2.500 1.100-4.400 1.100-6.300 .3s-3.500-1.200-5.500-.3" stroke-width="1.200"/></svg>
<div class="a t" style="left:568.5px;top:-0.2px;height:50px;line-height:50px;font-size:14px;color:#fff;">帮助中心</div>
<div class="a t" style="left:664.5px;top:-0.2px;height:50px;line-height:50px;font-size:14px;color:#fff;">系统管理</div>
<div class="a t" style="left:1626.6px;top:-0.2px;height:50px;line-height:50px;font-size:14px;color:#fff;">充值</div>
<div class="a" style="left:1660.75px;top:3.3px;width:26.5px;height:17.4px;background:#FF5722;border-radius:9px;color:#fff;font-size:12px;line-height:20px;text-align:center">39</div>
<div class="a t" style="left:1696.6px;top:-0.2px;height:50px;line-height:50px;font-size:14px;color:#fff;">提现</div>
<div class="a" style="left:1730.5px;top:3.3px;width:19.5px;height:17.4px;background:#FF5722;border-radius:9px;color:#fff;font-size:12px;line-height:20px;text-align:center">0</div>
<svg class="i" style="left:1767px;top:18.900px" width="14" height="14" viewBox="0 0 14 14" fill="none" stroke="#fff" stroke-width="2.300"><path d="M11.600 9.300A5 5 0 1 1 10.500 3.400"/><path d="M13.200 .6v5.600h-5.600z" fill="#fff" stroke="none"/></svg>
<svg class="i" style="left:1824.4px;top:20.2px" width="11" height="12.500" viewBox="0 0 11 12.500"><circle cx="5.500" cy="3.900" r="3.250" fill="none" stroke="#fff" stroke-width="1.400"/><path d="M.8 12.300a4.700 5.300 0 0 1 9.400 0" fill="none" stroke="#fff" stroke-width="1.400" stroke-linecap="butt"/></svg>
<div class="a t" style="left:1842px;top:1px;height:50px;line-height:50px;font-size:15px;color:#fff;">admin</div>
<svg class="i" style="left:1891.700px;top:21.700px" width="13" height="8" viewBox="0 0 13 8" fill="none" stroke="rgba(255,255,255,.85)" stroke-width="1.250" stroke-linecap="round" stroke-linejoin="round"><path d="M1 6.800l5.400-5.600 5.400 5.600"/></svg>
</body></html>
